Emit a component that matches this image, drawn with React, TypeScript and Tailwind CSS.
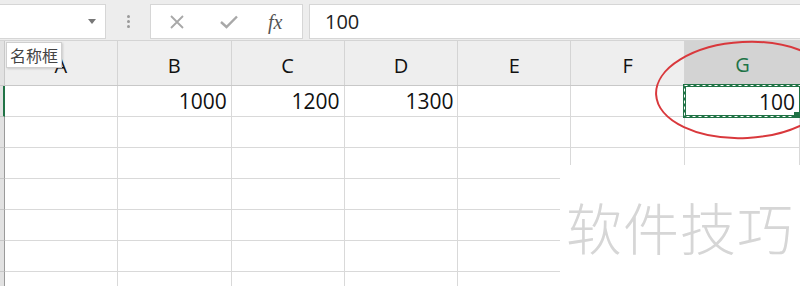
import React from "react";

const cols = [
  { l: "A", w: 113 },
  { l: "B", w: 114 },
  { l: "C", w: 113 },
  { l: "D", w: 114 },
  { l: "E", w: 113 },
  { l: "F", w: 114 },
  { l: "G", w: 115 },
];

const row1: Record<string, string> = { B: "1000", C: "1200", D: "1300", G: "100" };

export default function App() {
  const font = { fontFamily: '"Open Sans","Noto Sans","Noto Sans CJK SC",sans-serif' };
  return (
    <div className="relative w-[800px] h-[286px] overflow-hidden bg-white" style={font}>
      {/* top bar */}
      <div className="flex h-[41px] items-stretch bg-[#ededed] border-b border-[#d4d4d4] pt-[4px] pb-[1px]">
        <div className="w-[106px] bg-white border border-[#d6d6d6] border-l-0 flex items-center justify-end pr-[9px]">
          <svg width="8" height="5" viewBox="0 0 8 5"><path d="M0 0h8L4 5z" fill="#777" /></svg>
        </div>
        <div className="w-[44px] flex flex-col items-center justify-center gap-[2px]">
          <span className="w-[3px] h-[3px] rounded-full bg-[#9a9a9a]" />
          <span className="w-[3px] h-[3px] rounded-full bg-[#9a9a9a]" />
          <span className="w-[3px] h-[3px] rounded-full bg-[#9a9a9a]" />
        </div>
        <div className="w-[153px] bg-white border border-[#d6d6d6] flex items-center">
          <svg className="ml-[18px]" width="16" height="16" viewBox="0 0 16 16">
            <path d="M2 2L14 14M14 2L2 14" stroke="#a8a8a8" strokeWidth="1.8" fill="none" />
          </svg>
          <svg className="ml-[35px]" width="18" height="14" viewBox="0 0 18 14">
            <path d="M1 7L6.5 12L17 1.5" stroke="#a8a8a8" strokeWidth="2.4" fill="none" />
          </svg>
          <span className="ml-[30px] text-[20px] italic text-[#555]" style={{ fontFamily: '"Liberation Serif",serif' }}>
            fx
          </span>
        </div>
        <div className="ml-[6px] flex-1 bg-white border border-[#d6d6d6] border-r-0 flex items-center pl-[15px] text-[20px] text-[#222]">
          100
        </div>
      </div>

      {/* header row */}
      <div className="flex h-[45px] bg-[#eeeeee] border-b border-[#c8c8c8]">
        <div className="w-[5px] border-r border-[#c8c8c8] bg-[#e2e2e2]" />
        {cols.map((c) => (
          <div
            key={c.l}
            style={{ width: c.w }}
            className={
              c.l === "G"
                ? "flex items-end justify-center pb-[4px] text-[20px] text-[#217346] bg-[#d3d3d3] border-b-2 border-[#217346] -mb-px"
                : "flex items-end justify-center pb-[4px] text-[20px] text-[#111] border-r border-[#d4d4d4]"
            }
          >
            {c.l}
          </div>
        ))}
      </div>

      {/* rows */}
      {Array.from({ length: 7 }).map((_, r) => (
        <div key={r} className="flex h-[31px]">
          <div
            className={
              r === 0
                ? "w-[5px] bg-[#e2e2e2] border-r-2 border-[#217346] border-b border-b-[#c8c8c8]"
                : "w-[5px] bg-[#e2e2e2] border-r border-[#9a9a9a] border-b border-b-[#c8c8c8]"
            }
          />
          {cols.map((c) => (
            <div
              key={c.l}
              style={{ width: c.w }}
              className="border-r border-b border-[#d9d9d9] flex items-end justify-end pr-[4px] pb-[1px] text-[21px] leading-[28px] text-[#111]"
            >
              {r === 0 && c.l !== "G" ? row1[c.l] ?? "" : ""}
            </div>
          ))}
        </div>
      ))}

      {/* selected cell with marching ants */}
      <div className="absolute left-[683px] top-[84px] w-[117px] h-[34px]">
        <svg className="absolute inset-0" width="117" height="34">
          <rect x="1.5" y="1.5" width="116" height="31" fill="none" stroke="#217346" strokeWidth="3" />
          <rect x="1.5" y="1.5" width="116" height="31" fill="none" stroke="#ffffff" strokeWidth="1" strokeDasharray="3 3" />
          <rect x="111" y="28" width="6" height="6" fill="#217346" />
        </svg>
        <div className="absolute right-[5px] bottom-[2px] text-[21px] leading-[28px] text-[#111]">100</div>
      </div>

      {/* tooltip */}
      <div className="absolute left-[6px] top-[42px] h-[26px] px-[3px] bg-white border border-[#cfcfcf] shadow-[1px_1px_2px_rgba(0,0,0,0.15)] flex items-center text-[16px] text-[#444]" style={{ fontFamily: '"Noto Sans CJK SC",sans-serif' }}>
        名称框
      </div>

      {/* watermark */}
      <div className="absolute left-[560px] top-[165px] w-[240px] h-[121px] bg-white flex items-center justify-center">
        <span className="text-[56px] leading-none text-[#d6d6d6] tracking-[1px]" style={{ fontFamily: '"Noto Sans CJK SC",sans-serif', fontWeight: 300 }}>
          软件技巧
        </span>
      </div>

      {/* red ellipse */}
      <svg className="absolute left-0 top-0 pointer-events-none" width="800" height="286">
        <ellipse cx="745" cy="90" rx="89" ry="48" fill="none" stroke="#d9383c" strokeWidth="2" transform="rotate(-3 745 90)" />
      </svg>
    </div>
  );
}
